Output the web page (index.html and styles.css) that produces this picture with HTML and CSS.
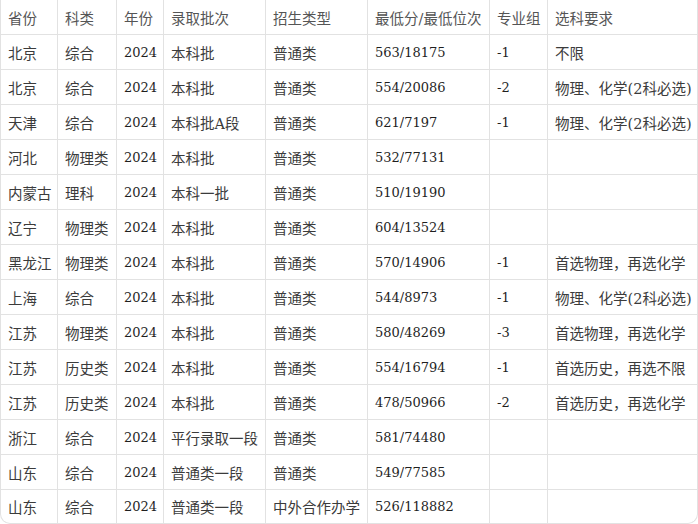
FILE: index.html
```html
<!DOCTYPE html>
<html lang="zh-CN">
<head>
<meta charset="utf-8">
<title>录取分数</title>
<link rel="stylesheet" href="styles.css">
</head>
<body>
<div class="table-wrap">
<table class="score-table">
<colgroup>
<col class="w-prov"><col class="w-kind"><col class="w-year"><col class="w-batch"><col class="w-type"><col class="w-score"><col class="w-group"><col class="w-req">
</colgroup>
<thead>
<tr><th>省份</th><th>科类</th><th>年份</th><th>录取批次</th><th>招生类型</th><th>最低分/最低位次</th><th>专业组</th><th>选科要求</th></tr>
</thead>
<tbody>
<tr><td>北京</td><td>综合</td><td class="num">2024</td><td>本科批</td><td>普通类</td><td class="num">563/18175</td><td class="num">-1</td><td>不限</td></tr>
<tr><td>北京</td><td>综合</td><td class="num">2024</td><td>本科批</td><td>普通类</td><td class="num">554/20086</td><td class="num">-2</td><td>物理、化学(2科必选)</td></tr>
<tr><td>天津</td><td>综合</td><td class="num">2024</td><td>本科批A段</td><td>普通类</td><td class="num">621/7197</td><td class="num">-1</td><td>物理、化学(2科必选)</td></tr>
<tr><td>河北</td><td>物理类</td><td class="num">2024</td><td>本科批</td><td>普通类</td><td class="num">532/77131</td><td class="num"></td><td></td></tr>
<tr><td>内蒙古</td><td>理科</td><td class="num">2024</td><td>本科一批</td><td>普通类</td><td class="num">510/19190</td><td class="num"></td><td></td></tr>
<tr><td>辽宁</td><td>物理类</td><td class="num">2024</td><td>本科批</td><td>普通类</td><td class="num">604/13524</td><td class="num"></td><td></td></tr>
<tr><td>黑龙江</td><td>物理类</td><td class="num">2024</td><td>本科批</td><td>普通类</td><td class="num">570/14906</td><td class="num">-1</td><td>首选物理，再选化学</td></tr>
<tr><td>上海</td><td>综合</td><td class="num">2024</td><td>本科批</td><td>普通类</td><td class="num">544/8973</td><td class="num">-1</td><td>物理、化学(2科必选)</td></tr>
<tr><td>江苏</td><td>物理类</td><td class="num">2024</td><td>本科批</td><td>普通类</td><td class="num">580/48269</td><td class="num">-3</td><td>首选物理，再选化学</td></tr>
<tr><td>江苏</td><td>历史类</td><td class="num">2024</td><td>本科批</td><td>普通类</td><td class="num">554/16794</td><td class="num">-1</td><td>首选历史，再选不限</td></tr>
<tr><td>江苏</td><td>历史类</td><td class="num">2024</td><td>本科批</td><td>普通类</td><td class="num">478/50966</td><td class="num">-2</td><td>首选历史，再选化学</td></tr>
<tr><td>浙江</td><td>综合</td><td class="num">2024</td><td>平行录取一段</td><td>普通类</td><td class="num">581/74480</td><td class="num"></td><td></td></tr>
<tr><td>山东</td><td>综合</td><td class="num">2024</td><td>普通类一段</td><td>普通类</td><td class="num">549/77585</td><td class="num"></td><td></td></tr>
<tr><td>山东</td><td>综合</td><td class="num">2024</td><td>普通类一段</td><td>中外合作办学</td><td class="num">526/118882</td><td class="num"></td><td></td></tr>
</tbody>
</table>
</div>
</body>
</html>
```
FILE: styles.css
```css
html, body {
  margin: 0;
  padding: 0;
  background: #ffffff;
}

body {
  font-family: "DejaVu Serif", "Noto Sans CJK SC", serif;
  color: #3b3b3b;
}

.table-wrap {
  width: 698px;
  box-sizing: border-box;
  border: 1px solid #e2e2e2;
  border-top: 0;
  border-radius: 0 0 10px 10px;
  overflow: hidden;
}

.score-table {
  width: 696px;
  table-layout: fixed;
  border-collapse: separate;
  border-spacing: 0;
}

.w-prov { width: 57px; }
.w-kind { width: 59px; }
.w-year { width: 47px; }
.w-batch { width: 102px; }
.w-type { width: 102px; }
.w-score { width: 122px; }
.w-group { width: 58px; }
.w-req { width: 149px; }

.score-table th,
.score-table td {
  height: 34px;
  padding: 0 0 0 7px;
  border-right: 1px solid #e2e2e2;
  border-bottom: 1px solid #e2e2e2;
  text-align: left;
  vertical-align: middle;
  font-size: 14.5px;
  font-weight: normal;
  white-space: nowrap;
  overflow: hidden;
}

.score-table th {
  color: #555555;
}

.score-table th:last-child,
.score-table td:last-child {
  border-right: 0;
}

.score-table tbody tr:last-child td {
  border-bottom: 0;
  height: 33px;
}

.score-table td.num {
  font-size: 13px;
  color: #1f1f1f;
}
```
